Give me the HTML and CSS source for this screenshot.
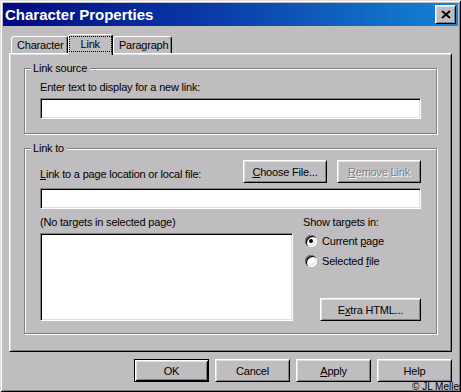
FILE: index.html
```html
<!DOCTYPE html>
<html lang="en">
<head>
<meta charset="utf-8">
<title>Character Properties</title>
<link rel="stylesheet" href="styles.css">
</head>
<body>
<div class="window">
  <div class="titlebar">
    <span class="title">Character Properties</span>
    <button class="close" type="button" aria-label="Close">
      <svg width="10" height="9" viewBox="0 0 10 9"><path d="M1 1L9 8M9 1L1 8" stroke="#000" stroke-width="2" fill="none"/></svg>
    </button>
  </div>

  <div class="tabs">
    <div class="tab">Character</div>
    <div class="tab tab-active"><span class="focus">Link</span></div>
    <div class="tab">Paragraph</div>
  </div>

  <div class="panel">
    <fieldset class="group">
      <legend>Link source</legend>
      <div class="group-body">
        <div class="field-label">Enter text to display for a new link:</div>
        <div class="textbox textbox-source"></div>
      </div>
    </fieldset>

    <fieldset class="group group-target">
      <legend>Link to</legend>
      <div class="group-body">
        <div class="row-top">
          <div class="field-label label-target"><u>L</u>ink to a page location or local file:</div>
          <div class="btn-pair">
            <div class="btn btn-wide"><u>C</u>hoose File...</div>
            <div class="btn btn-wide btn-disabled"><u>R</u>emove Link</div>
          </div>
        </div>
        <div class="textbox textbox-target"></div>
        <div class="targets">
          <div class="targets-list">
            <div class="field-label">(No targets in selected page)</div>
            <div class="listbox"></div>
          </div>
          <div class="targets-options">
            <div class="field-label">Show targets in:</div>
            <div class="radio-group">
              <div class="radio-row"><span class="radio radio-checked"></span><span>Current <u>p</u>age</span></div>
              <div class="radio-row"><span class="radio"></span><span>Selected <u>f</u>ile</span></div>
            </div>
            <div class="btn btn-extra">E<u>x</u>tra HTML...</div>
          </div>
        </div>
      </div>
    </fieldset>
  </div>

  <div class="actions">
    <div class="btn btn-action btn-default">OK</div>
    <div class="btn btn-action">Cancel</div>
    <div class="btn btn-action"><u>A</u>pply</div>
    <div class="btn btn-action">Help</div>
  </div>

  <div class="credit">© JL Meller</div>
</div>
</body>
</html>
```

FILE: styles.css
```css
html, body {
  margin: 0;
  padding: 0;
  overflow: hidden;
  background: #c0bdc0;
}

body {
  font-family: "Liberation Sans", Arial, sans-serif;
  font-size: 11px;
  letter-spacing: -0.2px;
  color: #000;
}

u {
  text-decoration: underline;
  text-underline-offset: 1px;
}

.window {
  position: relative;
  box-sizing: border-box;
  width: 461px;
  height: 392px;
  padding: 3px;
  background: #c0bdc0;
  box-shadow: inset 1px 1px 0 #dfdfdf, inset -1px -1px 0 #000, inset 2px 2px 0 #fff, inset -2px -2px 0 #808080;
  display: flex;
  flex-direction: column;
}

/* Title bar */
.titlebar {
  height: 23px;
  display: flex;
  align-items: center;
  justify-content: space-between;
  padding: 0 2px 0 2px;
  background: linear-gradient(to right, #000a80 0%, #0a3aa8 45%, #1484d4 100%);
}

.title {
  font-size: 15px;
  font-weight: bold;
  letter-spacing: 0;
  line-height: 23px;
  color: #fff;
}

.close {
  box-sizing: border-box;
  width: 21px;
  height: 19px;
  padding: 0;
  margin: 0;
  display: flex;
  align-items: center;
  justify-content: center;
  background: #c0bdc0;
  border: 1px solid;
  border-color: #fff #000 #000 #fff;
  box-shadow: inset 1px 1px 0 #dfdfdf, inset -1px -1px 0 #808080;
}

/* Tabs */
.tabs {
  display: flex;
  align-items: flex-end;
  margin: 8px 6px 0;
  padding-left: 2px;
}

.tab {
  box-sizing: border-box;
  height: 17px;
  padding: 0 3px 0 5px;
  border: 1px solid;
  border-bottom: none;
  border-color: #fff #000 transparent #fff;
  border-radius: 3px 3px 0 0;
  box-shadow: inset -1px 0 0 #808080;
  line-height: 16px;
  white-space: nowrap;
  background: #c0bdc0;
}

.tab-active {
  position: relative;
  z-index: 1;
  height: 21px;
  margin-bottom: -2px;
  padding: 1px 0 0;
}

.focus {
  display: block;
  border: 1px dotted #000;
  line-height: 14px;
  padding: 0 11px;
}

/* Panel */
.panel {
  box-sizing: border-box;
  height: 299px;
  margin: 0 6px;
  padding-top: 8px;
  border: 1px solid;
  border-color: #fff #000 #000 #fff;
  box-shadow: inset 1px 1px 0 #dfdfdf, inset -1px -1px 0 #808080;
}

.group {
  margin: 0 14px;
  padding: 0;
  min-width: 0;
  border: 1px solid #808080;
  box-shadow: inset 1px 1px 0 #fff, 1px 1px 0 #fff;
}

.group + .group {
  margin-top: 8px;
}

.group legend {
  margin-left: 6px;
  padding: 0 3px 0 2px;
  line-height: 13px;
  background: #c0bdc0;
}

.group-body {
  padding: 0 15px 14px;
}

.group-target .group-body {
  padding-bottom: 12px;
}

.field-label {
  line-height: 13px;
  white-space: nowrap;
}

.textbox,
.listbox {
  box-sizing: border-box;
  background: #fff;
  border: 1px solid;
  border-color: #808080 #fff #fff #808080;
  box-shadow: inset 1px 1px 0 #000, inset -1px -1px 0 #dfdfdf;
}

.textbox {
  height: 21px;
}

.textbox-source {
  margin-top: 4px;
}

.group:first-child .field-label {
  margin-top: 6px;
}

.textbox-target {
  margin-top: 5px;
}

.row-top {
  display: flex;
  justify-content: space-between;
  align-items: flex-end;
  padding-top: 5px;
}

.label-target {
  margin-bottom: 2px;
}

.btn-pair {
  display: flex;
  gap: 10px;
}

/* Buttons */
.btn {
  box-sizing: border-box;
  height: 23px;
  display: flex;
  align-items: center;
  justify-content: center;
  white-space: nowrap;
  background: #c0bdc0;
  border: 1px solid;
  border-color: #fff #000 #000 #fff;
  box-shadow: inset 1px 1px 0 #dfdfdf, inset -1px -1px 0 #808080;
}

.btn-wide {
  width: 84px;
}

.btn-disabled {
  color: #808080;
  text-shadow: 1px 1px 0 #fff;
}

.btn-default {
  border-color: #000;
  box-shadow: inset 1px 1px 0 #fff, inset -1px -1px 0 #000, inset 2px 2px 0 #dfdfdf, inset -2px -2px 0 #808080;
}

/* Targets area */
.targets {
  display: flex;
  gap: 10px;
  margin-top: 7px;
}

.targets-list {
  flex: none;
  width: 253px;
}

.listbox {
  height: 88px;
  margin-top: 4px;
}

.targets-options {
  flex: 1;
  display: flex;
  flex-direction: column;
}

.radio-group {
  margin-top: 2px;
}

.radio-row {
  height: 20px;
  display: flex;
  align-items: center;
  gap: 5px;
  padding-left: 2px;
}

.radio {
  position: relative;
  flex: none;
  width: 12px;
  height: 12px;
  border-radius: 50%;
  background: #fff;
  box-shadow: inset 1px 1px 0 #808080, inset 2px 2px 0 #000, inset -1px -1px 0 #fff, inset -2px -2px 0 #dfdfdf;
}

.radio-checked::after {
  content: "";
  position: absolute;
  left: 4px;
  top: 4px;
  width: 4px;
  height: 4px;
  border-radius: 50%;
  background: #000;
}

.btn-extra {
  width: 101px;
  margin-top: auto;
  align-self: flex-end;
}

/* Dialog buttons */
.actions {
  display: flex;
  justify-content: flex-end;
  gap: 6px;
  margin-top: 7px;
  padding-right: 6px;
}

.btn-action {
  width: 75px;
}

.credit {
  position: absolute;
  left: 412px;
  top: 381px;
  font-size: 10px;
  line-height: 12px;
  letter-spacing: 0;
  white-space: nowrap;
  color: #000;
}
```
